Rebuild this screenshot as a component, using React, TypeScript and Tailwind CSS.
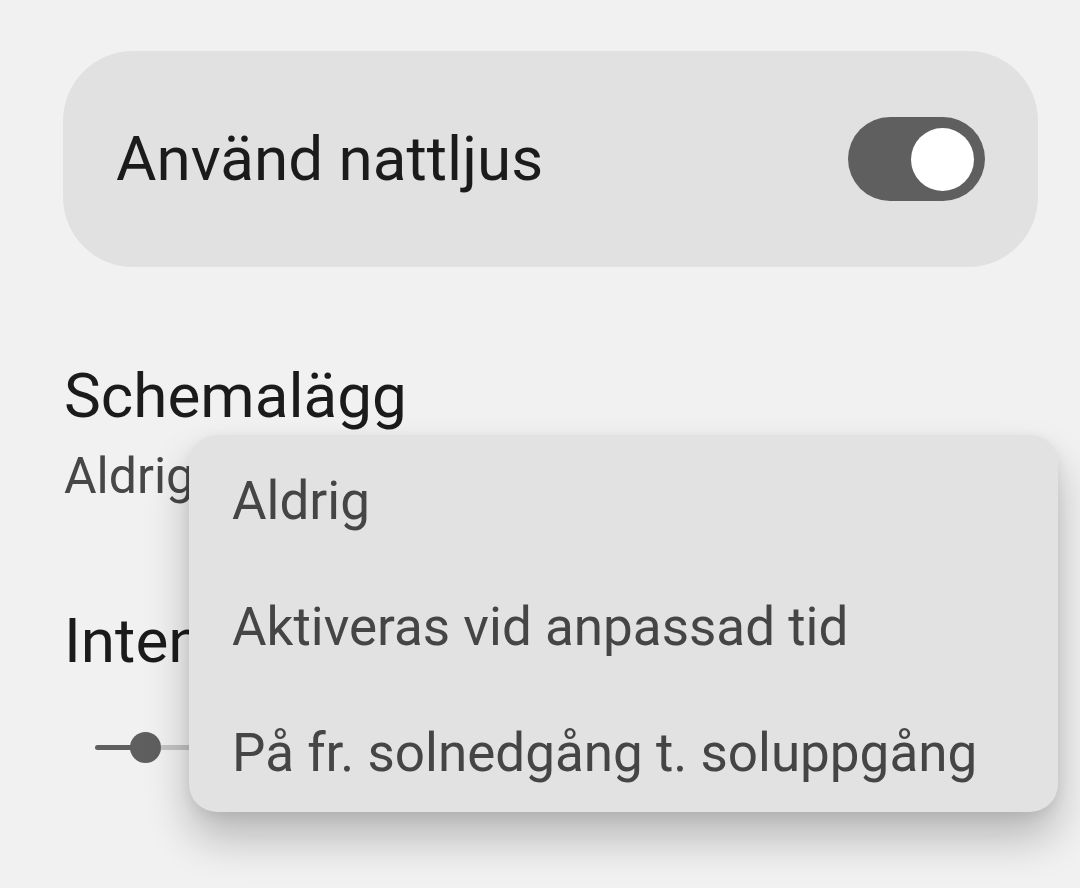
import { useState } from 'react'

const options = [
  'Aldrig',
  'Aktiveras vid anpassad tid',
  'På fr. solnedgång t. soluppgång',
]

export default function App() {
  const [enabled, setEnabled] = useState(true)
  const [selected, setSelected] = useState(0)

  return (
    <div
      className="relative w-[1080px] h-[888px] overflow-hidden bg-[#f1f1f1]"
      style={{ fontFamily: 'Roboto, "Noto Sans", sans-serif' }}
    >
      {/* main switch card */}
      <div className="ml-[63px] mr-[42px] mt-[51px] h-[216px] rounded-[70px] bg-[#e1e1e1] flex items-center justify-between pl-[53px] pr-[53px]">
        <span className="text-[62px] leading-[62px] text-[#1b1b1b]">Använd nattljus</span>
        <button
          onClick={() => setEnabled(!enabled)}
          className={`w-[137px] h-[84px] rounded-full flex items-center px-[11px] ${
            enabled ? 'bg-[#5f5f5f] justify-end' : 'bg-[#c4c4c4] justify-start'
          }`}
        >
          <span className="w-[63px] h-[63px] rounded-full bg-white" />
        </button>
      </div>

      {/* schedule */}
      <div className="ml-[64px] mt-[98px]">
        <div className="text-[62px] leading-[62px] text-[#1b1b1b]">Schemalägg</div>
        <div className="mt-[24px] text-[50px] leading-[50px] text-[#474747]">{options[selected]}</div>
      </div>

      {/* intensity */}
      <div className="ml-[64px] mt-[109px] text-[62px] leading-[62px] text-[#1b1b1b]">Intensitet</div>
      <div className="ml-[95px] mr-[95px] mt-[60px] h-[31px] flex items-center">
        <div className="w-[36px] h-[5px] rounded-l-full bg-[#5f5f5f]" />
        <div className="w-[31px] h-[31px] rounded-full bg-[#5f5f5f] -ml-[1px]" />
        <div className="flex-1 h-[5px] rounded-r-full bg-[#c4c4c4]" />
      </div>

      {/* dropdown menu */}
      <div className="absolute left-[189px] top-[435px] w-[869px] h-[377px] rounded-[28px] bg-[#e2e2e2] overflow-hidden pt-[3px] shadow-[0_26px_44px_rgba(0,0,0,0.24),0_4px_14px_rgba(0,0,0,0.07)]">
        {options.map((opt, i) => (
          <div
            key={opt}
            onClick={() => setSelected(i)}
            className="h-[126px] flex items-center pl-[43px] text-[53px] leading-[53px] text-[#454545] whitespace-nowrap"
          >
            {opt}
          </div>
        ))}
      </div>
    </div>
  )
}
